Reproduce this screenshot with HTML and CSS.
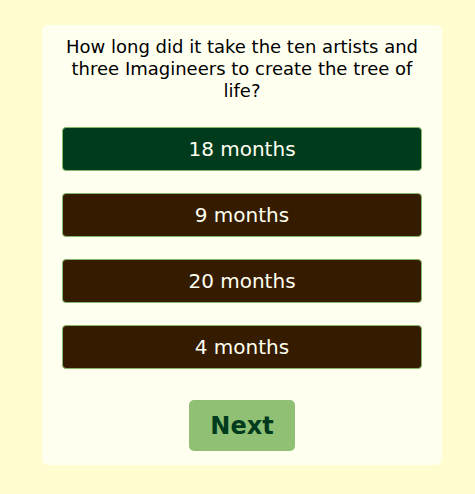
FILE: index.html
```html
<!DOCTYPE html>
<html>
<head>
<meta charset="utf-8">
<link rel="stylesheet" href="styles.css">
</head>
<body>
<div class="card">
  <p class="question">How long did it take the ten artists and three Imagineers to create the tree of life?</p>
  <div class="answers">
    <button class="answer correct">18 months</button>
    <button class="answer">9 months</button>
    <button class="answer">20 months</button>
    <button class="answer">4 months</button>
  </div>
  <button class="next">Next</button>
</div>
</body>
</html>
```

FILE: styles.css
```css
html, body {
  margin: 0;
  padding: 0;
  background: #fffdd0;
  font-family: "DejaVu Sans", Verdana, sans-serif;
}
body {
  padding: 25px 0 0 42px;
}
.card {
  width: 400px;
  box-sizing: border-box;
  background: #fffff0;
  border-radius: 6px;
  padding: 11px 20px 14px;
  display: flex;
  flex-direction: column;
  align-items: center;
}
.question {
  margin: 0;
  font-size: 18px;
  line-height: 22px;
  text-align: center;
  color: #000;
}
.answers {
  width: 100%;
  display: flex;
  flex-direction: column;
  gap: 22px;
  margin-top: 25px;
}
.answer {
  height: 44px;
  box-sizing: border-box;
  border: 1px solid #86b86a;
  border-radius: 4px;
  background: #351c00;
  color: #fffff0;
  font-family: "DejaVu Sans", Verdana, sans-serif;
  font-size: 20px;
  padding: 0;
}
.answer.correct {
  background: #003b1e;
}
.next {
  margin-top: 31px;
  width: 106px;
  height: 51px;
  border: none;
  border-radius: 5px;
  background: #90c074;
  color: #003b1e;
  font-family: "DejaVu Sans", Verdana, sans-serif;
  font-weight: bold;
  font-size: 24px;
  padding: 0;
}
```
